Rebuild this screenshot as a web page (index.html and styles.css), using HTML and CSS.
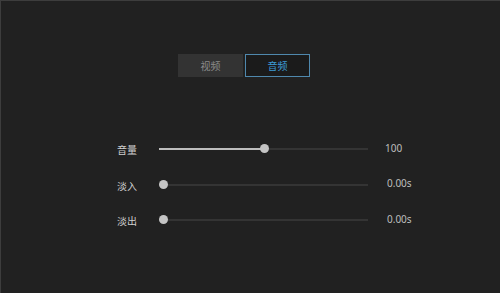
FILE: index.html
```html
<!DOCTYPE html>
<html lang="zh">
<head>
<meta charset="utf-8">
<link rel="stylesheet" href="styles.css">
</head>
<body>
<div class="app">
  <div class="tabs">
    <div class="tab">视频</div>
    <div class="tab active">音频</div>
  </div>
  <div class="rows">
    <div class="row">
      <span class="label">音量</span>
      <div class="slider"><div class="track"></div><div class="fill" style="width:105px"></div><div class="thumb" style="left:101px"></div></div>
      <span class="value">100</span>
    </div>
    <div class="row">
      <span class="label">淡入</span>
      <div class="slider"><div class="track"></div><div class="thumb" style="left:0"></div></div>
      <span class="value v2">0.00s</span>
    </div>
    <div class="row">
      <span class="label">淡出</span>
      <div class="slider"><div class="track"></div><div class="thumb" style="left:0"></div></div>
      <span class="value v2">0.00s</span>
    </div>
  </div>
</div>
</body>
</html>
```
FILE: styles.css
```css
html, body {
  margin: 0;
  padding: 0;
  background: #212121;
}
.app {
  width: 500px;
  height: 293px;
  box-sizing: border-box;
  border-top: 1px solid #3d3d3d;
  border-left: 1px solid #3d3d3d;
  background: #212121;
  padding-top: 53px;
  font-family: "Noto Sans", "Noto Sans CJK SC", sans-serif;
}
.tabs {
  display: flex;
  gap: 2px;
  padding-left: 177px;
}
.tab {
  width: 65px;
  height: 23px;
  box-sizing: border-box;
  background: #333333;
  color: #8a8a8a;
  font-size: 10px;
  line-height: 23px;
  text-align: center;
  font-family: "Noto Sans CJK SC", sans-serif;
}
.tab.active {
  background: #1b1b1b;
  border: 1px solid #4f88ad;
  line-height: 21px;
  color: #3d9ad6;
}
.rows {
  padding-top: 54px;
  padding-left: 116px;
  display: flex;
  flex-direction: column;
}
.row {
  height: 35.5px;
  display: flex;
  align-items: center;
}
.label {
  width: 42px;
  color: #d0d0d0;
  font-size: 10px;
  font-family: "Noto Sans CJK SC", sans-serif;
  position: relative;
  top: 1px;
}
.slider {
  position: relative;
  width: 209px;
  height: 9px;
}
.track {
  position: absolute;
  left: 0;
  right: 0;
  top: 4px;
  height: 2px;
  background: #343434;
}
.fill {
  position: absolute;
  left: 0;
  top: 4px;
  height: 2px;
  background: #bdbdbd;
}
.thumb {
  position: absolute;
  top: 0;
  width: 9px;
  height: 9px;
  border-radius: 50%;
  background: #c4c4c4;
}
.value {
  margin-left: 17px;
  color: #bdbdbd;
  font-size: 10px;
  position: relative;
  top: -1px;
}
.value.v2 {
  margin-left: 19px;
}
```
